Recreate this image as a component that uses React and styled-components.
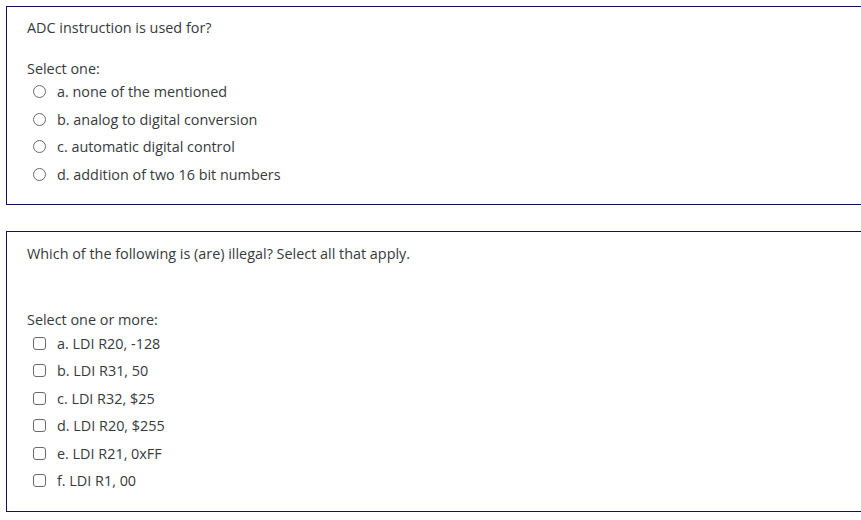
import styled, { createGlobalStyle } from 'styled-components'

const GlobalStyle = createGlobalStyle`
  html, body {
    margin: 0;
    padding: 0;
    background: #fff;
  }
  body {
    font-family: "Open Sans", "Liberation Sans", sans-serif;
    font-size: 14.4px;
    line-height: 21px;
    color: #373a3c;
  }
`;

const questions = [
  {
    id: 1,
    text: 'ADC instruction is used for?',
    prompt: 'Select one:',
    type: 'radio',
    gap: 20,
    options: [
      'a. none of the mentioned',
      'b. analog to digital conversion',
      'c. automatic digital control',
      'd. addition of two 16 bit numbers',
    ],
  },
  {
    id: 2,
    text: 'Which of the following is (are) illegal? Select all that apply.',
    prompt: 'Select one or more:',
    type: 'checkbox',
    gap: 45,
    options: [
      'a. LDI R20, -128',
      'b. LDI R31, 50',
      'c. LDI R32, $25',
      'd. LDI R20, $255',
      'e. LDI R21, 0xFF',
      'f. LDI R1, 00',
    ],
  },
];

function App() {
  return (
    <>
      <GlobalStyle />
      <Page>
        {questions.map((q) => (
          <QuestionBox key={q.id} $tall={q.type === 'checkbox'}>
            <QuestionText>{q.text}</QuestionText>
            <Prompt $gap={q.gap}>{q.prompt}</Prompt>
            <OptionList $tight={q.type === 'checkbox'}>
              {q.options.map((opt) => (
                <Option key={opt} $tight={q.type === 'checkbox'}>
                  {q.type === 'radio' ? <Radio /> : <Checkbox />}
                  <span>{opt}</span>
                </Option>
              ))}
            </OptionList>
          </QuestionBox>
        ))}
      </Page>
    </>
  );
}

export default App

const Page = styled.div`
  padding: 6px 0 0 6px;
  display: flex;
  flex-direction: column;
  gap: 26px;
  overflow: hidden;
`;

const QuestionBox = styled.div`
  border: 1px solid #0f0f5c;
  border-right: none;
  padding: ${(props) => (props.$tall ? '11px 20px 13px' : '10px 20px 12px')};
`;

const QuestionText = styled.div`
  margin: 0;
`;

const Prompt = styled.div`
  margin-top: ${(props) => `${props.$gap}px`};
`;

const OptionList = styled.div`
  display: flex;
  flex-direction: column;
  padding-top: ${(props) => (props.$tight ? '3px' : '2px')};
`;

const Option = styled.label`
  display: flex;
  align-items: center;
  gap: 11px;
  padding-left: 6px;
  margin-bottom: ${(props) => (props.$tight ? '6.5px' : '6.7px')};
`;

const Radio = styled.span`
  width: 11px;
  height: 11px;
  border: 1px solid #6a6a6a;
  border-radius: 50%;
  flex-shrink: 0;
`;

const Checkbox = styled.span`
  width: 11px;
  height: 11px;
  border: 1px solid #6a6a6a;
  border-radius: 3px;
  flex-shrink: 0;
`;
